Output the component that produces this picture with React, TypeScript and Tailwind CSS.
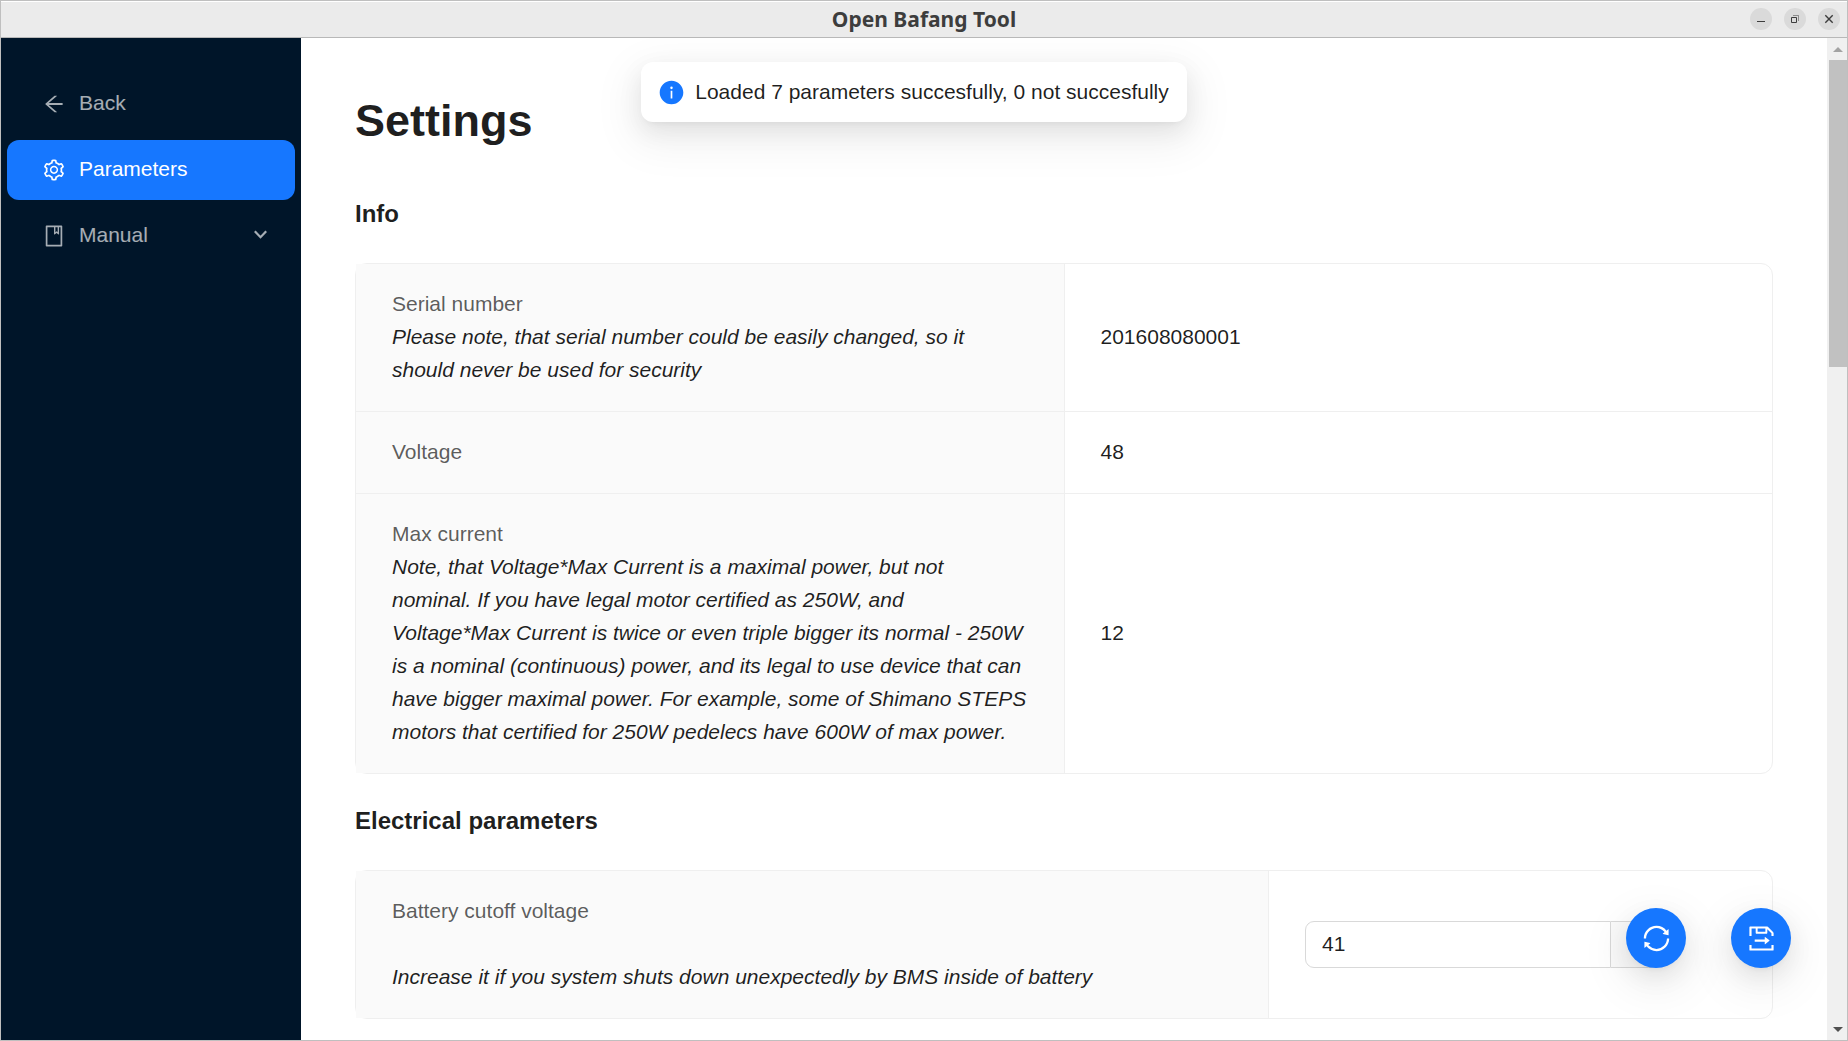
import type { ReactNode } from "react";
import {
  AiFillInfoCircle,
  AiOutlineArrowLeft,
  AiOutlineBook,
  AiOutlineDeliveredProcedure,
  AiOutlineSetting,
  AiOutlineSync,
} from "react-icons/ai";

const SANS = "font-['Liberation_Sans',Arial,sans-serif]";
const SHADOW =
  "shadow-[0_9px_24px_0_rgba(0,0,0,0.08),0_4px_9px_-6px_rgba(0,0,0,0.12),0_14px_42px_12px_rgba(0,0,0,0.05)]";

function WindowButton({ label, children }: { label: string; children: ReactNode }) {
  return (
    <button
      type="button"
      aria-label={label}
      className="flex size-[22px] items-center justify-center rounded-full bg-[#dadada] text-[#3d3d3d]"
    >
      {children}
    </button>
  );
}

function TitleBar() {
  return (
    <header className="grid h-9 shrink-0 grid-cols-[1fr_auto_1fr] items-center border-t border-white bg-[#ebebeb] pb-px">
      <h1 className="col-start-2 font-['Noto_Sans',sans-serif] text-[21px] leading-6 font-bold text-[#3d3d3d]">
        Open Bafang Tool
      </h1>
      <div className="flex justify-end gap-3 pr-[7px]">
        <WindowButton label="Minimize">
          <svg width="12" height="12" viewBox="0 0 12 12" fill="none" stroke="currentColor">
            <path d="M2 8.5h8" />
          </svg>
        </WindowButton>
        <WindowButton label="Restore">
          <svg width="12" height="12" viewBox="0 0 12 12" fill="none" stroke="currentColor">
            <path d="M2.5 4.5h5v5h-5z" />
            <path d="M4 2.5h5.500v5.500" opacity="0.5" />
          </svg>
        </WindowButton>
        <WindowButton label="Close">
          <svg width="12" height="12" viewBox="0 0 12 12" fill="none" stroke="currentColor" strokeWidth="1.4">
            <path d="M2.300 2.300l7.400 7.400M9.700 2.300l-7.400 7.400" />
          </svg>
        </WindowButton>
      </div>
    </header>
  );
}

function Sidebar() {
  const item =
    "flex h-[60px] w-full items-center gap-[13px] rounded-xl pl-[35px] pr-7 text-left text-[21px] leading-[33px]";
  return (
    <nav className="flex w-[300px] shrink-0 flex-col gap-1.5 bg-[#001529] px-1.5 pt-9">
      <button type="button" className={`${item} text-white/65`}>
        <AiOutlineArrowLeft className="size-6" />
        <span className="pb-1">Back</span>
      </button>
      <button type="button" aria-current="page" className={`${item} bg-[#1677ff] text-white`}>
        <AiOutlineSetting className="size-6" />
        <span className="pb-1">Parameters</span>
      </button>
      <button type="button" aria-expanded="false" className={`${item} text-white/65`}>
        <AiOutlineBook className="size-6" />
        <span className="flex-1 pb-1">Manual</span>
        <svg className="mb-1" width="13" height="10" viewBox="0 0 13 10" fill="none" stroke="currentColor" strokeWidth="2.200">
          <path d="M0.800 2.200l5.700 6 5.700-6" />
        </svg>
      </button>
    </nav>
  );
}

function Row({ label, note, columns, children }: { label: string; note?: ReactNode; columns: string; children: ReactNode }) {
  return (
    <tr className="border-b border-[#efefef] last:border-b-0">
      <th
        scope="row"
        className={`${columns} border-r border-[#efefef] bg-[#fafafa] px-9 pt-[23px] pb-[25px] text-left align-middle font-normal text-black/65`}
      >
        {label}
        {note && <em className="block text-black/88">{note}</em>}
      </th>
      <td className="px-9 pt-[23px] pb-[25px] align-middle">{children}</td>
    </tr>
  );
}

function Section({ title, children }: { title: string; children: ReactNode }) {
  return (
    <section className="mb-[29px]">
      <h3 className="mb-[31px] text-2xl leading-9 font-bold">{title}</h3>
      <div className="rounded-xl border border-[#efefef]">
        <table className="w-full table-fixed border-collapse">
          <tbody>{children}</tbody>
        </table>
      </div>
    </section>
  );
}

function Content() {
  return (
    <main className="min-w-0 flex-1 overflow-hidden px-[54px] pt-[54px]">
      <h2 className="mb-[47px] text-[45px] leading-[57px] font-bold">Settings</h2>
      <Section title="Info">
        <Row
          columns="w-1/2"
          label="Serial number"
          note="Please note, that serial number could be easily changed, so it should never be used for security"
        >
          201608080001
        </Row>
        <Row columns="w-1/2" label="Voltage">
          48
        </Row>
        <Row
          columns="w-1/2"
          label="Max current"
          note="Note, that Voltage*Max Current is a maximal power, but not nominal. If you have legal motor certified as 250W, and Voltage*Max Current is twice or even triple bigger its normal - 250W is a nominal (continuous) power, and its legal to use device that can have bigger maximal power. For example, some of Shimano STEPS motors that certified for 250W pedelecs have 600W of max power."
        >
          12
        </Row>
      </Section>
      <Section title="Electrical parameters">
        <Row
          columns="w-[64.45%]"
          label="Battery cutoff voltage"
          note={
            <>
              <br />
              Increase it if you system shuts down unexpectedly by BMS inside of battery
            </>
          }
        >
          <div className="mt-0.5 flex h-[47px] w-[354px]">
            <input
              type="text"
              aria-label="Battery cutoff voltage"
              defaultValue="41"
              className="min-w-0 flex-1 rounded-l-[9px] border border-[#d9d9d9] bg-white px-4 pb-0.5 outline-none focus:border-[#1677ff]"
            />
            <span className="w-12 rounded-r-[9px] border border-l-0 border-[#d9d9d9] bg-[#fafafa]" />
          </div>
        </Row>
      </Section>
    </main>
  );
}

function ScrollBar() {
  return (
    <div className="flex w-5 shrink-0 flex-col bg-[#f0f0f0] pl-0.5" aria-hidden="true">
      <div className="flex h-[22px] items-center justify-center">
        <svg width="10" height="5" viewBox="0 0 10 5" fill="#a3a3a3">
          <path d="M0 5l5-5 5 5z" />
        </svg>
      </div>
      <div className="min-h-0 flex-1">
        <div className="h-[32%] bg-[#c1c1c1]" />
      </div>
      <div className="flex h-[22px] items-center justify-center">
        <svg width="10" height="5" viewBox="0 0 10 5" fill="#505050">
          <path d="M0 0l5 5 5-5z" />
        </svg>
      </div>
    </div>
  );
}

function FloatButton({ label, children }: { label: string; children: ReactNode }) {
  return (
    <button
      type="button"
      aria-label={label}
      className={`flex size-[60px] items-center justify-center rounded-full bg-[#1677ff] text-[31px] text-white ${SHADOW}`}
    >
      {children}
    </button>
  );
}

export default function App() {
  return (
    <div
      className={`${SANS} flex h-screen flex-col overflow-hidden border border-[#bfbfbf] bg-white text-[21px] leading-[33px] text-black/88`}
    >
      <TitleBar />
      <div className="relative flex min-h-0 flex-1 overflow-hidden border-t border-[#b8b8b8]">
        <Sidebar />
        <Content />
        <ScrollBar />
        <div className="pointer-events-none absolute top-6 right-5 left-0 flex justify-center">
          <div
            role="status"
            className={`flex h-[60px] items-center gap-2.5 rounded-xl bg-white pr-[18px] pl-[17px] ${SHADOW}`}
          >
            <AiFillInfoCircle className="size-[27px] text-[#1677ff]" />
            <span className="pb-0.5">Loaded 7 parameters succesfully, 0 not succesfully</span>
          </div>
        </div>
        <div className="absolute right-14 bottom-[72px] flex gap-[45px]">
          <FloatButton label="Reload parameters">
            <AiOutlineSync />
          </FloatButton>
          <FloatButton label="Write parameters">
            <AiOutlineDeliveredProcedure />
          </FloatButton>
        </div>
      </div>
    </div>
  );
}
